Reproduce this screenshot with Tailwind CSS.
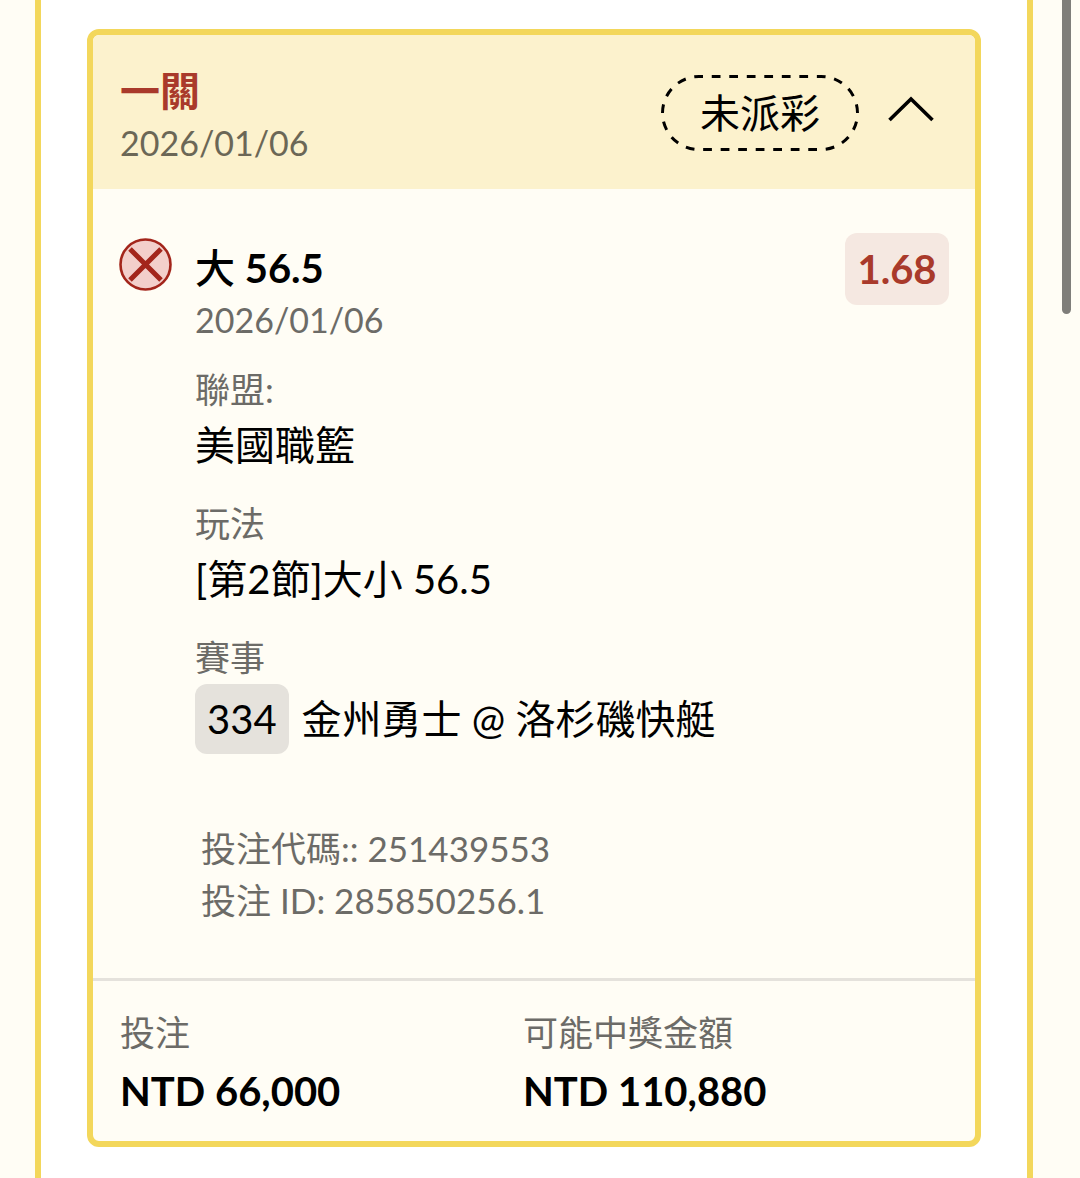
<!DOCTYPE html>
<html lang="zh-Hant">
<head>
    <meta charset="UTF-8">
    <meta name="viewport" content="width=device-width, initial-scale=1.0">
    <title>投注紀錄</title>
    <script src="https://cdn.jsdelivr.net/npm/@tailwindcss/browser@4"></script>
    <style>
        body {
            font-family: Lato, "Noto Sans CJK TC", sans-serif;
        }
        ::-webkit-scrollbar {
            display: none;
        }
    </style>
</head>
<body class="bg-[#fffdf5] text-black">
    <!-- Scroll indicator -->
    <div class="fixed top-0 right-[9px] w-[9px] h-[314px] rounded-b-full bg-[#7f7e7a]"></div>

    <main class="ml-[35px] mr-[47px] min-h-screen border-x-6 border-[#f3d75b] bg-white px-[46px] pt-[29px] pb-[31px]">
        <article class="overflow-hidden rounded-xl border-6 border-[#f3d75b] bg-[#fffdf5]">

            <!-- Card header -->
            <header class="flex items-start justify-between bg-[#fcf2cd] pl-[27px] pr-[38px] pt-[30px] pb-[20px]">
                <div>
                    <h2 class="text-[40px] leading-[52px] font-bold text-[#a93a2b]">一關</h2>
                    <p class="text-[34px] leading-[52px] text-[#6b6756]">2026/01/06</p>
                </div>
                <div class="flex items-start gap-[25px] pt-[10px]">
                    <span class="relative flex h-[76px] w-[198px] items-center justify-center text-[40px]">
                        <svg class="absolute inset-0 size-full" viewBox="0 0 198 76" fill="none" aria-hidden="true">
                            <rect x="1.5" y="1.5" width="195" height="73" rx="36.5" pathLength="486" stroke="#000" stroke-width="3" stroke-dasharray="9 9" stroke-dashoffset="4.9"/>
                        </svg>
                        未派彩
                    </span>
                    <button type="button" aria-label="收合" aria-expanded="true" class="flex h-[68px] w-[53px] items-center justify-center">
                        <svg class="h-[26px] w-[46px]" viewBox="0 0 46 26" fill="none" stroke="#000" stroke-width="3.6" aria-hidden="true">
                            <path d="M1.5 24 23 3l21.5 21"/>
                        </svg>
                    </button>
                </div>
            </header>

            <!-- Selection -->
            <section class="flex items-start px-[26px] pt-[44px] pb-[52px]">
                <svg class="mt-[5px] mr-[23px] size-[53px] shrink-0" viewBox="0 0 53 53" role="img" aria-label="未中">
                    <circle cx="26.5" cy="26.5" r="25" fill="#f3cfcb" stroke="#a3251b" stroke-width="2.6"/>
                    <path d="M11 11l31 31M42 11L11 42" stroke="#a3251b" stroke-width="5" fill="none"/>
                </svg>
                <div class="flex-1">
                    <h3 class="pt-[9px] text-[40px] leading-[52px] font-bold"><span class="font-medium">大</span> 56.5</h3>
                    <p class="text-[34px] leading-[52px] text-[#6c6b67]">2026/01/06</p>

                    <dl class="mt-[17px]">
                        <dt class="text-[35px] leading-[52px] text-[#6c6b67]">聯盟:</dt>
                        <dd class="mb-[22px] text-[40px] leading-[60px]">美國職籃</dd>
                        <dt class="text-[35px] leading-[52px] text-[#6c6b67]">玩法</dt>
                        <dd class="mb-[22px] text-[40px] leading-[60px]">[第2節]大小 56.5</dd>
                        <dt class="text-[35px] leading-[52px] text-[#6c6b67]">賽事</dt>
                        <dd class="mt-px flex items-center text-[40px] leading-[70px]">
                            <span class="mr-[13px] rounded-xl bg-[#e5e2dc] px-3">334</span>
                            金州勇士 @ 洛杉磯快艇
                        </dd>
                    </dl>

                    <div class="mt-[68px] pl-[6px] text-[35px] leading-[52px] text-[#6c6b67]">
                        <p>投注代碼:: 251439553</p>
                        <p>投注 ID: 285850256.1</p>
                    </div>
                </div>
                <span class="w-[104px] rounded-xl bg-[#f5e8e1] text-center text-[40px] leading-[72px] font-bold text-[#a93a2b]">1.68</span>
            </section>

            <!-- Totals -->
            <footer class="border-t-3 border-[#e5e2dc] pl-[27px] pr-[49px] pt-[25px] pb-5">
                <dl class="grid grid-cols-2">
                    <div>
                        <dt class="mb-[3px] text-[35px] leading-[52px] text-[#6c6b67]">投注</dt>
                        <dd class="text-[40px] leading-[60px] font-bold">NTD 66,000</dd>
                    </div>
                    <div>
                        <dt class="mb-[3px] text-[35px] leading-[52px] text-[#6c6b67]">可能中獎金額</dt>
                        <dd class="text-[40px] leading-[60px] font-bold">NTD 110,880</dd>
                    </div>
                </dl>
            </footer>
        </article>
    </main>
</body>
</html>
